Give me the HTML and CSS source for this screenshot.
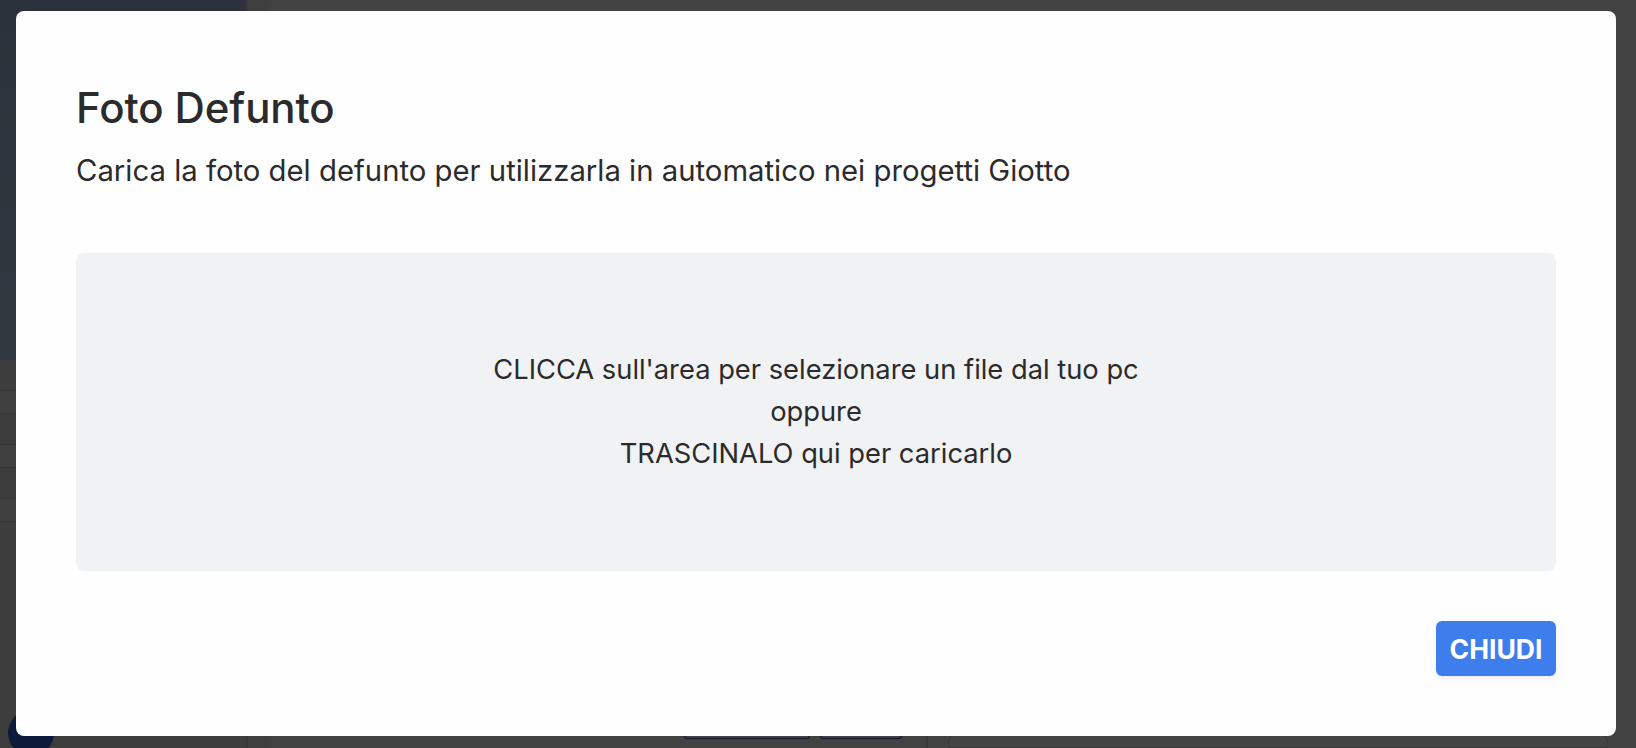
FILE: index.html
```html
<!DOCTYPE html>
<html lang="it">
<head>
  <meta charset="UTF-8" />
  <meta name="viewport" content="width=device-width, initial-scale=1.0" />
  <title>Foto Defunto</title>
  <link rel="stylesheet" href="styles.css">
</head>
<body>
  <!-- pagina sotto la modale (oscurata) -->
  <div class="page">
    <aside class="sidebar">
      <div class="sidebar-photo"></div>
      <div class="sidebar-row"></div>
      <div class="sidebar-row"></div>
      <div class="sidebar-row"></div>
      <div class="sidebar-avatar"></div>
    </aside>
    <main class="main">
      <div class="main-spacer"></div>
      <div class="main-footer">
        <div class="footer-left">
          <span class="ghost-btn wide"></span>
          <span class="ghost-btn"></span>
        </div>
        <div class="footer-card"></div>
      </div>
    </main>
  </div>

  <div class="modal">
    <h2 class="modal-title">Foto Defunto</h2>
    <p class="modal-subtitle">Carica la foto del defunto per utilizzarla in automatico nei progetti Giotto</p>

    <label class="dropzone" for="fotoFile">
      <span>CLICCA sull'area per selezionare un file dal tuo pc</span>
      <span>oppure</span>
      <span>TRASCINALO qui per caricarlo</span>
      <input type="file" id="fotoFile" accept="image/*" />
    </label>

    <div class="modal-actions">
      <button class="btn-primary">CHIUDI</button>
    </div>
  </div>
</body>
</html>
```

FILE: styles.css
```css
html, body {
  height: 100%;
}
body {
  margin: 0;
  background-color: #424242;
  font-family: Inter, "Noto Sans", Arial, sans-serif;
  overflow: hidden;
}

/* sfondo */
.page {
  display: flex;
  height: 100%;
}
.sidebar {
  width: 246px;
  display: flex;
  flex-direction: column;
  background-color: #3d3d3d;
  border-right: 2px solid #383838;
}
.sidebar-photo {
  height: 360px;
  background: linear-gradient(180deg, #2c323b 0%, #313840 100%);
}
.sidebar-row {
  height: 22px;
  margin-top: 30px;
  border-top: 1px solid #363636;
  border-bottom: 1px solid #363636;
  background-color: #404040;
}
.sidebar-avatar {
  width: 46px;
  height: 46px;
  margin: auto 0 0 8px;
  border-radius: 50%;
  background-color: #0d1a3a;
  transform: translateY(8px);
}
.main {
  flex: 1;
  display: flex;
  flex-direction: column;
  border-left: 20px solid #3f3f3f;
}
.main-spacer {
  flex: 1;
}
.main-footer {
  display: flex;
  height: 14px;
}
.footer-left {
  width: 660px;
  box-sizing: border-box;
  display: flex;
  justify-content: flex-end;
  gap: 10px;
  padding-right: 24px;
  border-right: 2px solid #3a3a3a;
}
.ghost-btn {
  width: 80px;
  height: 4px;
  border: 1px solid #0c1733;
  border-top: none;
  border-radius: 0 0 3px 3px;
}
.ghost-btn.wide {
  width: 124px;
}
.footer-card {
  flex: 1;
  margin: 0 28px 0 20px;
  border: 1px solid #3a3a3a;
  border-radius: 8px 8px 0 0;
  background-color: #444444;
}

/* modale */
.modal {
  position: absolute;
  left: 16px;
  top: 11px;
  width: 1600px;
  height: 725px;
  box-sizing: border-box;
  padding: 71px 60px 60px;
  background-color: #fefefe;
  border-radius: 8px;
  display: flex;
  flex-direction: column;
  color: #2b2b2b;
}
.modal-title {
  margin: 0;
  font-size: 42px;
  line-height: 52px;
  font-weight: 500;
  letter-spacing: -0.1px;
}
.modal-subtitle {
  margin: 19px 0 0;
  font-size: 29.3px;
  line-height: 36px;
}
.dropzone {
  margin-top: 64px;
  height: 319px;
  background-color: #f1f2f4;
  border-radius: 8px;
  display: flex;
  flex-direction: column;
  align-items: center;
  justify-content: center;
  font-size: 27.3px;
  line-height: 42px;
  cursor: pointer;
}
.dropzone input {
  display: none;
}
.modal-actions {
  margin-top: 50px;
  display: flex;
  justify-content: flex-end;
}
.btn-primary {
  width: 120px;
  height: 55px;
  border: none;
  border-radius: 6px;
  background-color: #3d7eec;
  color: #ffffff;
  font-family: inherit;
  font-size: 26.5px;
  font-weight: 700;
  box-shadow: 0 2px 4px rgba(0, 0, 0, 0.08);
  cursor: pointer;
}
.btn-primary:hover {
  background-color: #2f6fdc;
}
```
